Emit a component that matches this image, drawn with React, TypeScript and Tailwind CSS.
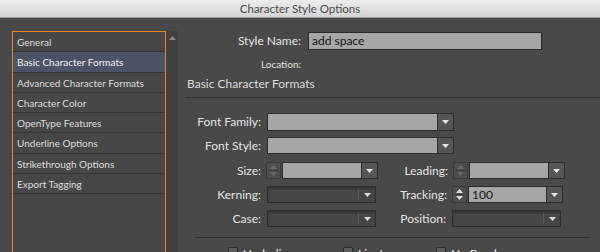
import React from "react";

const FONT = { fontFamily: "Lato, 'Open Sans', 'DejaVu Sans', sans-serif" };

const categories = [
  { label: "General", h: "h-[20px]" },
  { label: "Basic Character Formats", h: "h-[21px]", selected: true },
  { label: "Advanced Character Formats", h: "h-[20px]" },
  { label: "Character Color", h: "h-[20px]" },
  { label: "OpenType Features", h: "h-[20px]" },
  { label: "Underline Options", h: "h-[21px]" },
  { label: "Strikethrough Options", h: "h-[20px]" },
  { label: "Export Tagging", h: "h-[20px]" },
];

function Arrow({ color = "#e8e8e8" }: { color?: string }) {
  return (
    <svg width="7" height="4" viewBox="0 0 7 4">
      <path d="M0 0 L7 0 L3.5 4 Z" fill={color} />
    </svg>
  );
}

function Stepper({ enabled }: { enabled?: boolean }) {
  const c = enabled ? "#e0e0e0" : "#6a6a6a";
  return (
    <div className="flex h-[17px] w-[15px] flex-col items-center justify-center gap-[1px] rounded-[1px] border border-[#3a3a3a] bg-[#4e4e4e]">
      <svg width="7" height="4" viewBox="0 0 7 4">
        <path d="M0 4 L7 4 L3.5 0 Z" fill={c} />
      </svg>
      <div className="h-px w-[11px] bg-[#3c3c3c]" />
      <svg width="7" height="4" viewBox="0 0 7 4">
        <path d="M0 0 L7 0 L3.5 4 Z" fill={c} />
      </svg>
    </div>
  );
}

function Combo({ width, value, h = "h-[18px]" }: { width: string; value?: string; h?: string }) {
  return (
    <div className={`flex ${width} ${h} border border-[#2c2c2c]`}>
      <div className="flex flex-1 items-center bg-[#a6a6a6] pl-[3px] text-[12px] leading-[14px] text-[#141414]">{value}</div>
      <div className="flex w-[16px] items-center justify-center border-l border-[#2c2c2c] bg-[#565656]">
        <Arrow />
      </div>
    </div>
  );
}

function DisabledCombo({ width }: { width: string }) {
  return (
    <div className={`flex ${width} h-[17px] border border-[#2e2e2e] bg-[#464646] shadow-[inset_0_2px_2px_rgba(0,0,0,0.25)]`}>
      <div className="flex-1" />
      <div className="my-[2px] w-px bg-[#5a5a5a]" />
      <div className="flex w-[16px] items-center justify-center">
        <Arrow color="#dcdcdc" />
      </div>
    </div>
  );
}

function Label({ text, width, size = "text-[12px]" }: { text: string; width: string; size?: string }) {
  return <div className={`${width} shrink-0 text-right ${size} leading-[14px] text-[#e4e4e4]`}>{text}</div>;
}

function Check({ label, width }: { label: string; width: string }) {
  return (
    <div className={`flex ${width} shrink-0 items-start gap-[5px]`}>
      <div className="h-[10px] w-[10px] rounded-[1px] border border-[#2c2c2c] bg-[#5c5c5c]" />
      <span className="mt-[1px] text-[12px] leading-[12px] text-[#e4e4e4]">{label}</span>
    </div>
  );
}

export default function App() {
  return (
    <div className="h-[252px] w-[600px] overflow-hidden bg-[#494949]" style={FONT}>
      <div className="flex h-[18px] items-center justify-center border-b border-[#9c9c9c] bg-gradient-to-b from-[#ececec] to-[#d5d5d5] text-[11.5px] leading-[14px] text-[#4a4a4a]">
        Character Style Options
      </div>

      <div className="flex pt-[13px]">
        <div className="ml-[12px] flex">
          <div className="h-[240px] w-[154px] border border-[#e8882b] bg-[#474747]">
            {categories.map((c) => (
              <div
                key={c.label}
                className={`flex ${c.h} items-center border-b border-[#363636] pl-[4px] text-[10px] leading-[12px] ${
                  c.selected ? "bg-[#4a5466] text-[#f2f2f2]" : "text-[#dedede]"
                }`}
              >
                {c.label}
              </div>
            ))}
          </div>
          <div className="flex h-[240px] w-[12px] justify-center bg-[#3f3f3f] pt-[5px]">
            <svg width="7" height="4" viewBox="0 0 7 4">
              <path d="M0 4 L7 4 L3.5 0 Z" fill="#8a8a8a" />
            </svg>
          </div>
        </div>

        <div className="flex flex-1 flex-col">
          <div className="mt-[1px] flex h-[18px] items-center">
            <Label text="Style Name:" width="w-[123px]" />
            <div className="ml-[7px] flex h-[18px] w-[234px] items-center border border-[#2a2a2a] bg-[#a6a6a6] pl-[3px] text-[12px] leading-[14px] text-[#141414]">
              add space
            </div>
          </div>

          <div className="mt-[7px] flex h-[14px] items-center">
            <Label text="Location:" width="w-[123px]" size="text-[10px]" />
          </div>

          <div className="mt-[6px] flex h-[14px] items-center pl-[9px] text-[12px] leading-[14px] text-[#dcdcdc]">
            Basic Character Formats
          </div>

          <div className="ml-[8px] mt-[6px] h-px bg-[#333333]" />

          <div className="mt-[15px] flex items-center">
            <Label text="Font Family:" width="w-[83px]" />
            <div className="ml-[6px]">
              <Combo width="w-[187px]" />
            </div>
          </div>

          <div className="mt-[6px] flex items-center">
            <Label text="Font Style:" width="w-[83px]" />
            <div className="ml-[6px]">
              <Combo width="w-[187px]" h="h-[17px]" />
            </div>
          </div>

          <div className="mt-[8px] flex items-center">
            <Label text="Size:" width="w-[83px]" />
            <div className="ml-[5px] flex w-[112px] items-center gap-[1px]">
              <Stepper />
              <Combo width="w-[96px]" h="h-[17px]" />
            </div>
            <Label text="Leading:" width="w-[70px]" />
            <div className="ml-[5px] flex items-center gap-[1px]">
              <Stepper />
              <Combo width="w-[96px]" h="h-[17px]" />
            </div>
          </div>

          <div className="mt-[7px] flex items-center">
            <Label text="Kerning:" width="w-[83px]" />
            <div className="ml-[6px] w-[111px]">
              <DisabledCombo width="w-[109px]" />
            </div>
            <Label text="Tracking:" width="w-[69px]" />
            <div className="ml-[5px] flex items-center gap-[1px]">
              <Stepper enabled />
              <Combo width="w-[95px]" h="h-[17px]" value="100" />
            </div>
          </div>

          <div className="mt-[7px] flex items-center">
            <Label text="Case:" width="w-[83px]" />
            <div className="ml-[6px] w-[111px]">
              <DisabledCombo width="w-[109px]" />
            </div>
            <Label text="Position:" width="w-[68px]" />
            <div className="ml-[6px]">
              <DisabledCombo width="w-[109px]" />
            </div>
          </div>

          <div className="ml-[17px] mr-[10px] mt-[10px] h-px bg-[#333333]" />

          <div className="ml-[50px] mt-[9px] flex">
            <Check label="Underline" width="w-[115px]" />
            <Check label="Ligatures" width="w-[93px]" />
            <Check label="No Break" width="w-[100px]" />
          </div>
        </div>
      </div>
    </div>
  );
}
